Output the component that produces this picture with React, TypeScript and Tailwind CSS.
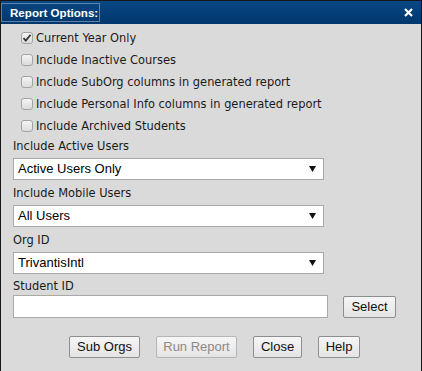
import React from "react";

const labelFont = { fontFamily: "'DejaVu Sans Condensed', 'DejaVu Sans', sans-serif" };

function Check({ checked }: { checked?: boolean }) {
  return (
    <span className="relative inline-flex h-[12px] w-[12px] shrink-0 items-center justify-center rounded-[3px] border border-[#a3a3a3] bg-gradient-to-b from-[#f4f4f4] to-[#dcdcdc]">
      {checked && (
        <svg width="10" height="10" viewBox="0 0 10 10" className="absolute left-[0px] top-[0px]">
          <path d="M1.5 5.2 L3.8 7.6 L8.6 1.8" fill="none" stroke="#333" strokeWidth="1.8" />
        </svg>
      )}
    </span>
  );
}

function Row({ text, checked }: { text: string; checked?: boolean }) {
  return (
    <div className="flex h-[22px] items-center gap-[3px] pl-[20px]">
      <Check checked={checked} />
      <span className="text-[12.7px] leading-none text-[#1a1a1a]" style={labelFont}>
        {text}
      </span>
    </div>
  );
}

function Label({ text, className = "" }: { text: string; className?: string }) {
  return (
    <div className={`flex h-[20px] items-center text-[12.7px] leading-none text-[#1a1a1a] ${className}`} style={labelFont}>
      {text}
    </div>
  );
}

function Select({ value, className = "" }: { value: string; className?: string }) {
  return (
    <div
      className={`flex h-[22px] w-[311px] items-center justify-between border border-[#a9a9a9] bg-white pl-[4px] pr-[7px] font-['Liberation_Sans',Arial,sans-serif] text-[13px] text-black ${className}`}
    >
      <span>{value}</span>
      <svg width="7" height="6" viewBox="0 0 7 6">
        <path d="M0 0 H7 L3.5 6 Z" fill="#111" />
      </svg>
    </div>
  );
}

function Btn({ text, w, disabled }: { text: string; w: string; disabled?: boolean }) {
  return (
    <div
      className={`flex h-[22px] ${w} items-center justify-center rounded-[2px] border ${
        disabled ? "border-[#b5b5b5] text-[#8a8a8a]" : "border-[#8e8e8e] text-[#111]"
      } bg-gradient-to-b from-[#f6f6f6] to-[#e4e4e4] font-['Liberation_Sans',Arial,sans-serif] text-[13px]`}
    >
      {text}
    </div>
  );
}

export default function App() {
  return (
    <div className="flex h-[371px] w-[422px] flex-col border-l border-r border-t border-[#161616] bg-[#dadada]">
      <div className="flex h-[23px] shrink-0 items-center justify-between bg-gradient-to-b from-[#0b4783] to-[#00376c] pr-[8px]">
        <div className="flex h-[19px] items-center border border-[#5b83b0] pl-[8px] pr-[1px] font-['Liberation_Sans',Arial,sans-serif] text-[11.6px] font-bold text-white">
          Report Options:
        </div>
        <svg width="9" height="9" viewBox="0 0 9 9">
          <path d="M1 1 L8 8 M8 1 L1 8" stroke="#fff" strokeWidth="2.2" />
        </svg>
      </div>
      <div className="flex flex-col pt-[3px]">
        <Row text="Current Year Only" checked />
        <Row text="Include Inactive Courses" />
        <Row text="Include SubOrg columns in generated report" />
        <Row text="Include Personal Info columns in generated report" />
        <Row text="Include Archived Students" />
        <div className="flex flex-col pl-[12px]">
          <Label text="Include Active Users" className="mt-[-1px]" />
          <Select value="Active Users Only" className="mt-[2px]" />
          <Label text="Include Mobile Users" className="mt-[3px]" />
          <Select value="All Users" className="mt-[2px]" />
          <Label text="Org ID" className="mt-[3px]" />
          <Select value="TrivantisIntl" className="mt-[2px]" />
          <Label text="Student ID" className="mt-[3px] !h-[18px]" />
          <div className="flex items-end">
            <div className="h-[23px] w-[315px] border border-[#a9a9a9] bg-white" />
            <div className="ml-[15px]">
              <Btn text="Select" w="w-[53px]" />
            </div>
          </div>
          <div className="mt-[18px] flex gap-[16px] pl-[56px]">
            <Btn text="Sub Orgs" w="w-[71px]" />
            <Btn text="Run Report" w="w-[81px]" disabled />
            <Btn text="Close" w="w-[49px]" />
            <Btn text="Help" w="w-[42px]" />
          </div>
        </div>
      </div>
    </div>
  );
}
